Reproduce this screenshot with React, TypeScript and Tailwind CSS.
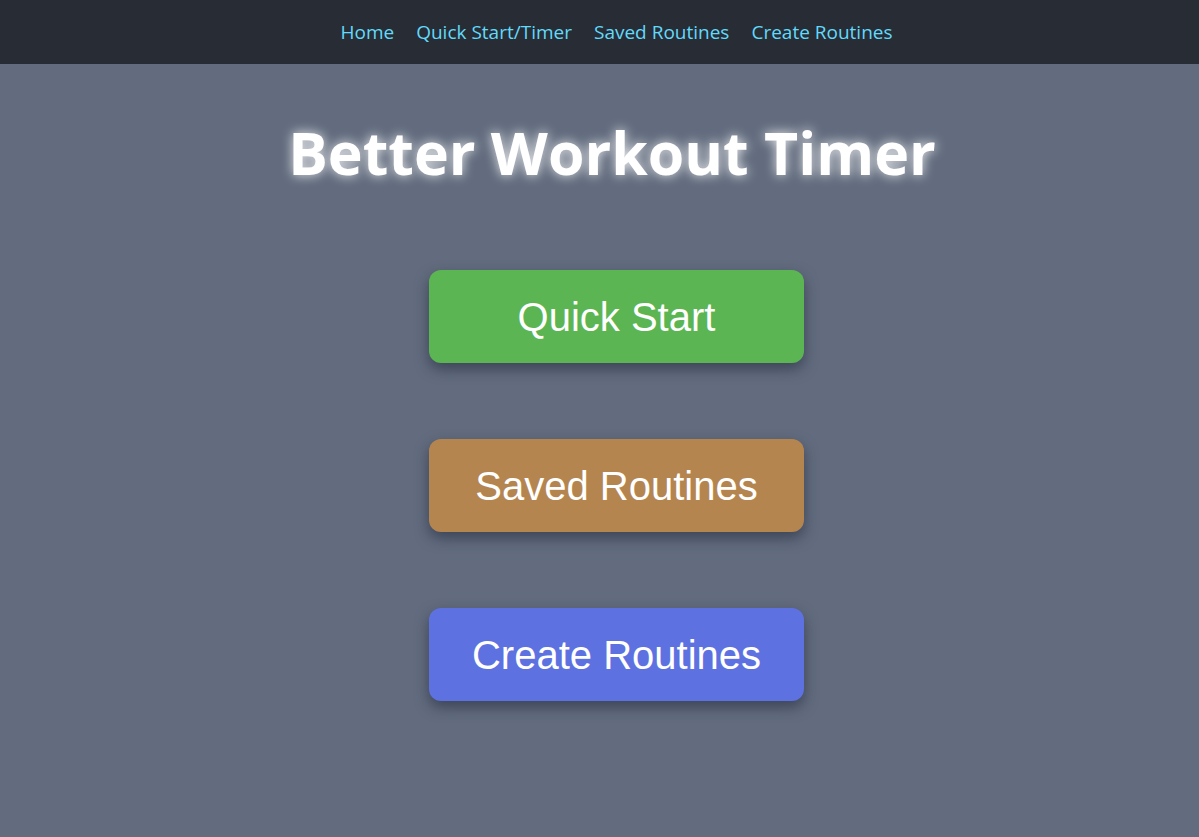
import React from 'react';

const navLinks = ['Home', 'Quick Start/Timer', 'Saved Routines', 'Create Routines'];

const buttons = [
  { label: 'Quick Start', bg: 'bg-[#5cb553]' },
  { label: 'Saved Routines', bg: 'bg-[#b5854f]' },
  { label: 'Create Routines', bg: 'bg-[#5e71e1]' },
];

export default function App() {
  return (
    <div className="min-h-screen bg-[#626c7e] font-['Open_Sans','Noto_Sans',sans-serif]">
      {/* Top nav */}
      <nav className="h-16 bg-[#282c34] flex items-center justify-center gap-[22px] pl-[34px]">
        {navLinks.map((l) => (
          <a key={l} href="#" className="text-[#61dafb] text-[19px]">
            {l}
          </a>
        ))}
      </nav>

      <main className="flex flex-col items-center pl-[34px]">
        <h1 className="mt-[46px] mr-[9px] text-white font-bold text-[59px] leading-[84px] [text-shadow:0_0_12px_rgba(255,255,255,0.9)]">
          Better Workout Timer
        </h1>

        <div className="mt-[76px] flex flex-col gap-[76px]">
          {buttons.map((b) => (
            <button
              key={b.label}
              className={`${b.bg} w-[375px] h-[93px] rounded-xl text-white text-[40px] font-['Liberation_Sans',Arial,sans-serif] shadow-[0_6px_14px_rgba(30,35,55,0.55)]`}
            >
              {b.label}
            </button>
          ))}
        </div>
      </main>
    </div>
  );
}
